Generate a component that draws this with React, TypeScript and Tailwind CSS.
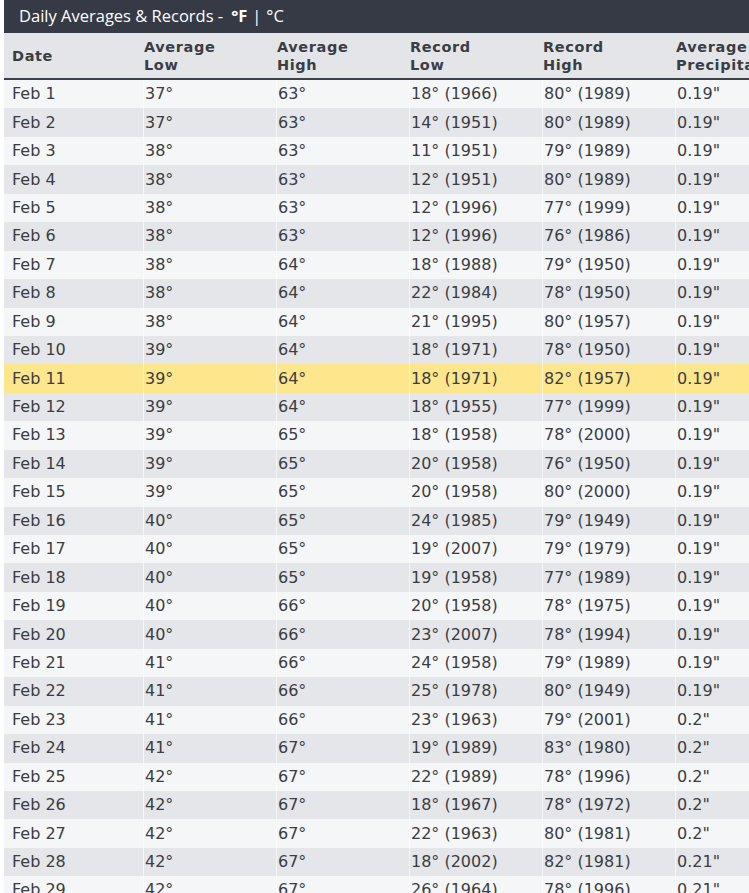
import React from 'react';

// date, avg low, avg high, record low, record high, precip
const rows: [string, number, number, string, string, string][] = [
  ['Feb 1', 37, 63, '18° (1966)', '80° (1989)', '0.19"'],
  ['Feb 2', 37, 63, '14° (1951)', '80° (1989)', '0.19"'],
  ['Feb 3', 38, 63, '11° (1951)', '79° (1989)', '0.19"'],
  ['Feb 4', 38, 63, '12° (1951)', '80° (1989)', '0.19"'],
  ['Feb 5', 38, 63, '12° (1996)', '77° (1999)', '0.19"'],
  ['Feb 6', 38, 63, '12° (1996)', '76° (1986)', '0.19"'],
  ['Feb 7', 38, 64, '18° (1988)', '79° (1950)', '0.19"'],
  ['Feb 8', 38, 64, '22° (1984)', '78° (1950)', '0.19"'],
  ['Feb 9', 38, 64, '21° (1995)', '80° (1957)', '0.19"'],
  ['Feb 10', 39, 64, '18° (1971)', '78° (1950)', '0.19"'],
  ['Feb 11', 39, 64, '18° (1971)', '82° (1957)', '0.19"'],
  ['Feb 12', 39, 64, '18° (1955)', '77° (1999)', '0.19"'],
  ['Feb 13', 39, 65, '18° (1958)', '78° (2000)', '0.19"'],
  ['Feb 14', 39, 65, '20° (1958)', '76° (1950)', '0.19"'],
  ['Feb 15', 39, 65, '20° (1958)', '80° (2000)', '0.19"'],
  ['Feb 16', 40, 65, '24° (1985)', '79° (1949)', '0.19"'],
  ['Feb 17', 40, 65, '19° (2007)', '79° (1979)', '0.19"'],
  ['Feb 18', 40, 65, '19° (1958)', '77° (1989)', '0.19"'],
  ['Feb 19', 40, 66, '20° (1958)', '78° (1975)', '0.19"'],
  ['Feb 20', 40, 66, '23° (2007)', '78° (1994)', '0.19"'],
  ['Feb 21', 41, 66, '24° (1958)', '79° (1989)', '0.19"'],
  ['Feb 22', 41, 66, '25° (1978)', '80° (1949)', '0.19"'],
  ['Feb 23', 41, 66, '23° (1963)', '79° (2001)', '0.2"'],
  ['Feb 24', 41, 67, '19° (1989)', '83° (1980)', '0.2"'],
  ['Feb 25', 42, 67, '22° (1989)', '78° (1996)', '0.2"'],
  ['Feb 26', 42, 67, '18° (1967)', '78° (1972)', '0.2"'],
  ['Feb 27', 42, 67, '22° (1963)', '80° (1981)', '0.2"'],
  ['Feb 28', 42, 67, '18° (2002)', '82° (1981)', '0.21"'],
  ['Feb 29', 42, 67, '26° (1964)', '78° (1996)', '0.21"'],
];

const TODAY = 'Feb 11';

const headers = [
  ['Date'],
  ['Average', 'Low'],
  ['Average', 'High'],
  ['Record', 'Low'],
  ['Record', 'High'],
  ['Average', 'Precipitation'],
];

const cols = 'grid grid-cols-[139px_133px_133px_133px_133px_133px]';

export default function App() {
  return (
    <div className="w-[749px] h-[893px] overflow-hidden bg-white pl-[4px] font-['DejaVu_Sans',sans-serif]">
      {/* Title bar */}
      <div className="h-[33px] bg-[#363a45] flex items-center pl-[15px] text-white text-[16.5px] font-['Open_Sans','Noto_Sans',sans-serif] whitespace-nowrap">
        <span>Daily Averages &amp; Records -</span>
        <span className="ml-[8px] font-bold">°F</span>
        <span className="mx-[5px]">|</span>
        <span>°C</span>
      </div>

      <div className="w-[804px]">
        {/* Column headers */}
        <div className={`${cols} h-[47px] bg-[#e3e5e9] border-b-2 border-[#3c4049] text-[#3a3d44] text-[14.5px] font-bold tracking-[0.6px] leading-[18px]`}>
          {headers.map((h, i) => (
            <div key={i} className={`flex flex-col justify-center ${i === 0 ? 'pl-[8px]' : 'pl-[1px]'}`}>
              {h.map((line) => (
                <span key={line} className="whitespace-nowrap">{line}</span>
              ))}
            </div>
          ))}
        </div>

        {/* Rows */}
        {rows.map((r, idx) => {
          const bg =
            r[0] === TODAY ? 'bg-[#fde68c]' : idx % 2 === 0 ? 'bg-[#f5f6f8]' : 'bg-[#e4e6ea]';
          const cells = [r[0], `${r[1]}°`, `${r[2]}°`, r[3], r[4], r[5]];
          return (
            <div key={r[0]} className={`${cols} h-[28.44px] ${bg} text-[#3b3d42] text-[16px]`}>
              {cells.map((c, i) => (
                <div
                  key={i}
                  className={`flex items-center whitespace-nowrap ${
                    i === 0 ? 'pl-[8px]' : 'pl-[1px] border-l border-white/60'
                  }`}
                >
                  {c}
                </div>
              ))}
            </div>
          );
        })}
      </div>
    </div>
  );
}
